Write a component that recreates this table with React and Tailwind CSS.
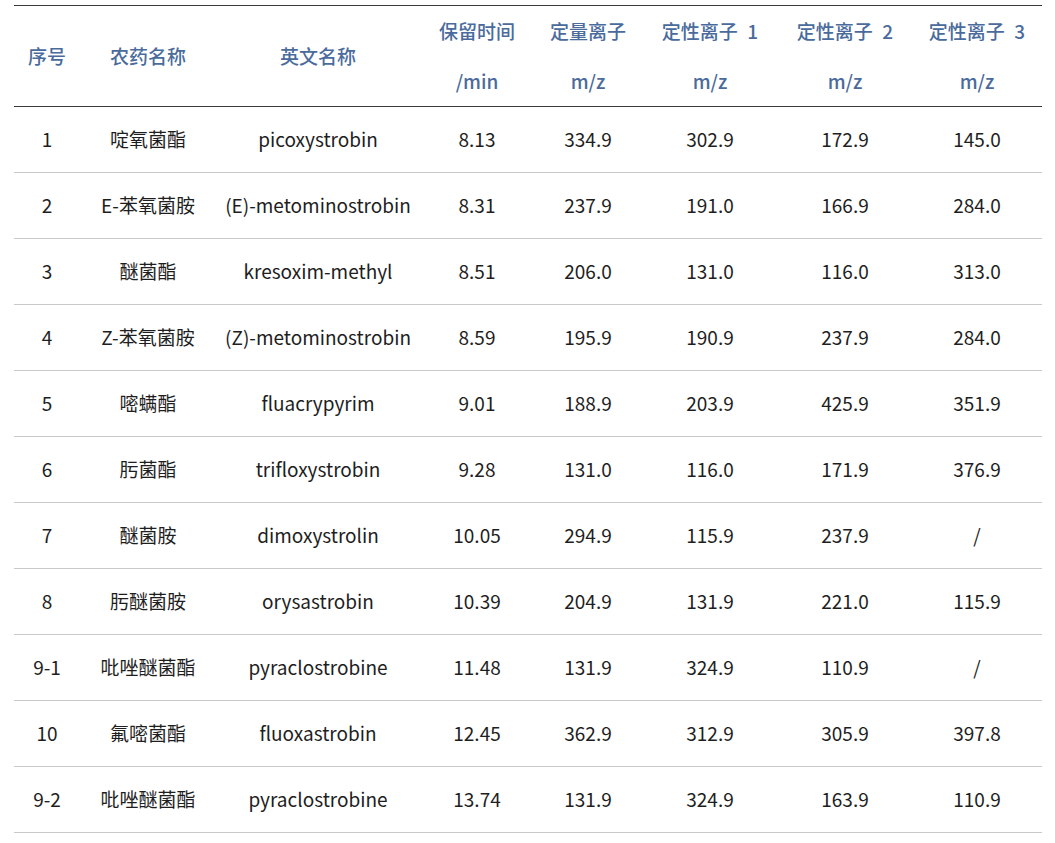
const cols = [66, 136, 204, 114, 108, 136, 134, 130];

const head = [
  ["序号"],
  ["农药名称"],
  ["英文名称"],
  ["保留时间", "/min"],
  ["定量离子", "m/z"],
  ["定性离子\u20021", "m/z"],
  ["定性离子\u20022", "m/z"],
  ["定性离子\u20023", "m/z"],
];

const rows = [
  ["1", "啶氧菌酯", "picoxystrobin", "8.13", "334.9", "302.9", "172.9", "145.0"],
  ["2", "E-苯氧菌胺", "(E)-metominostrobin", "8.31", "237.9", "191.0", "166.9", "284.0"],
  ["3", "醚菌酯", "kresoxim-methyl", "8.51", "206.0", "131.0", "116.0", "313.0"],
  ["4", "Z-苯氧菌胺", "(Z)-metominostrobin", "8.59", "195.9", "190.9", "237.9", "284.0"],
  ["5", "嘧螨酯", "fluacrypyrim", "9.01", "188.9", "203.9", "425.9", "351.9"],
  ["6", "肟菌酯", "trifloxystrobin", "9.28", "131.0", "116.0", "171.9", "376.9"],
  ["7", "醚菌胺", "dimoxystrolin", "10.05", "294.9", "115.9", "237.9", "/"],
  ["8", "肟醚菌胺", "orysastrobin", "10.39", "204.9", "131.9", "221.0", "115.9"],
  ["9-1", "吡唑醚菌酯", "pyraclostrobine", "11.48", "131.9", "324.9", "110.9", "/"],
  ["10", "氟嘧菌酯", "fluoxastrobin", "12.45", "362.9", "312.9", "305.9", "397.8"],
  ["9-2", "吡唑醚菌酯", "pyraclostrobine", "13.74", "131.9", "324.9", "163.9", "110.9"],
];

export default function App() {
  return (
    <div
      className="bg-white w-[1055px] h-[843px] pt-[5px] pl-[14px]"
      style={{ fontFamily: '"Noto Sans CJK SC", "Noto Sans", sans-serif' }}
    >
      <table className="table-fixed border-collapse w-[1028px] text-[19px]">
        <colgroup>
          {cols.map((w, i) => (
            <col key={i} style={{ width: w }} />
          ))}
        </colgroup>
        <thead>
          <tr className="border-t border-b border-[#3a3a3a]">
            {head.map((h, i) => (
              <th
                key={i}
                className="h-[101px] p-0 text-center align-middle font-medium text-[#4a6b9c] leading-[50px]"
              >
                {h.map((t, j) => (
                  <div key={j}>{t}</div>
                ))}
              </th>
            ))}
          </tr>
        </thead>
        <tbody>
          {rows.map((r, i) => (
            <tr key={i} className="border-b border-[#c9c9c9]">
              {r.map((c, j) => (
                <td key={j} className="h-[66px] p-0 text-center align-middle text-[#1e1e1e] whitespace-nowrap">
                  {c}
                </td>
              ))}
            </tr>
          ))}
        </tbody>
      </table>
    </div>
  );
}
